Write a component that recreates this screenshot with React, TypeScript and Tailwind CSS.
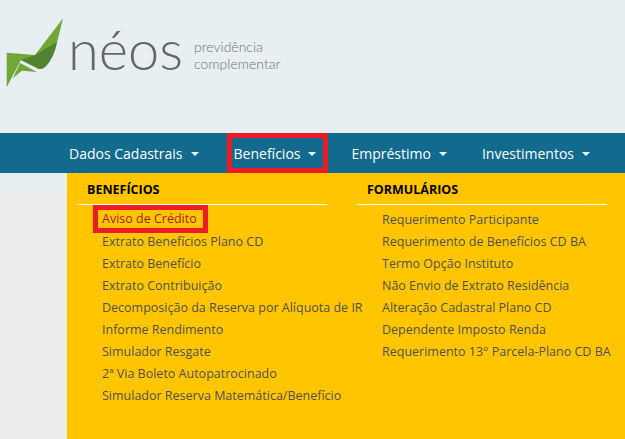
const beneficios = [
  "Extrato Benefícios Plano CD",
  "Extrato Benefício",
  "Extrato Contribuição",
  "Decomposição da Reserva por Alíquota de IR",
  "Informe Rendimento",
  "Simulador Resgate",
  "2ª Via Boleto Autopatrocinado",
  "Simulador Reserva Matemática/Benefício",
];

const formularios = [
  "Requerimento Participante",
  "Requerimento de Benefícios CD BA",
  "Termo Opção Instituto",
  "Não Envio de Extrato Residência",
  "Alteração Cadastral Plano CD",
  "Dependente Imposto Renda",
  "Requerimento 13° Parcela-Plano CD BA",
];

function Logo() {
  return (
    <div className="flex h-[133px] items-start bg-[#e8eff3]">
      <svg width="60" height="72" viewBox="0 0 60 72" className="ml-[5px] mt-[17px] shrink-0">
        <path d="M1.7 35.7 L30 38 L58 1.3 C53 22 50 36 44 45 C41 50 38 52 34 52 L16 43 L1.7 70.3Z" fill="#72a637" />
        <path d="M16 43 L30 38 L52 25 C50 36 46 44 41 49 C38 52 36 52 34 52Z" fill="#528232" />
        <path d="M8 61 L15 46 L32 55 L17 53.7Z" fill="#72a637" />
      </svg>
      <span className="ml-[3px] mt-[14px] font-['Lato',sans-serif] text-[56px] leading-[70px] font-light text-[#646667]">
        néos
      </span>
      <div className="ml-[11px] mt-[38px] font-['Lato',sans-serif] text-[14px] leading-[17px] font-light text-[#6f7172]">
        <div>previdência</div>
        <div>complementar</div>
      </div>
    </div>
  );
}

function NavItem({ label, className }: { label: string; className: string }) {
  return (
    <div className={`flex h-10 items-center gap-[8px] ${className}`}>
      <span>{label}</span>
      <span className="mt-px h-0 w-0 border-x-[4px] border-t-[4px] border-x-transparent border-t-white" />
    </div>
  );
}

function MenuColumn({ title, children, className }: { title: string; children: React.ReactNode; className: string }) {
  return (
    <div className={className}>
      <div className="border-b border-white pb-[2px] pl-[10px] pt-[5px] text-[12.5px] leading-[24px] font-bold text-black">{title}</div>
      <div className="pl-[25px]">{children}</div>
    </div>
  );
}

export default function App() {
  return (
    <div className="relative h-[439px] w-[625px] overflow-hidden bg-[#ededed] font-['Open_Sans',sans-serif]">
      <Logo />
      <nav className="flex h-10 items-center bg-[#126a8e] pl-[69px] text-[14px] text-white">
        <NavItem label="Dados Cadastrais" className="" />
        <NavItem label="Benefícios" className="ml-[28px] border-[5px] border-[#ed1c24] pl-[2px] pr-[7px]" />
        <NavItem label="Empréstimo" className="ml-[23px]" />
        <NavItem label="Investimentos" className="ml-[35px]" />
      </nav>
      <div className="h-5 bg-[#e8eff3]" />

      <div className="absolute bottom-0 left-[67px] right-0 top-[173px] flex bg-[#ffc600] pl-[10px] text-[12.5px] leading-[22px] text-[#505050]">
        <MenuColumn title="BENEFÍCIOS" className="w-[250px]">
          <div className="-ml-[9px] mb-[-2px] w-[115px] whitespace-nowrap border-[5px] border-[#ed1c24] pl-[4px] leading-[18px] text-[#a81a14]">
            Aviso de Crédito
          </div>
          {beneficios.map((item) => (
            <div key={item} className="whitespace-nowrap">{item}</div>
          ))}
        </MenuColumn>
        <MenuColumn title="FORMULÁRIOS" className="ml-[30px] w-[250px]">
          <div className="pt-[4px]">
            {formularios.map((item) => (
              <div key={item} className="whitespace-nowrap">{item}</div>
            ))}
          </div>
        </MenuColumn>
      </div>
    </div>
  );
}
